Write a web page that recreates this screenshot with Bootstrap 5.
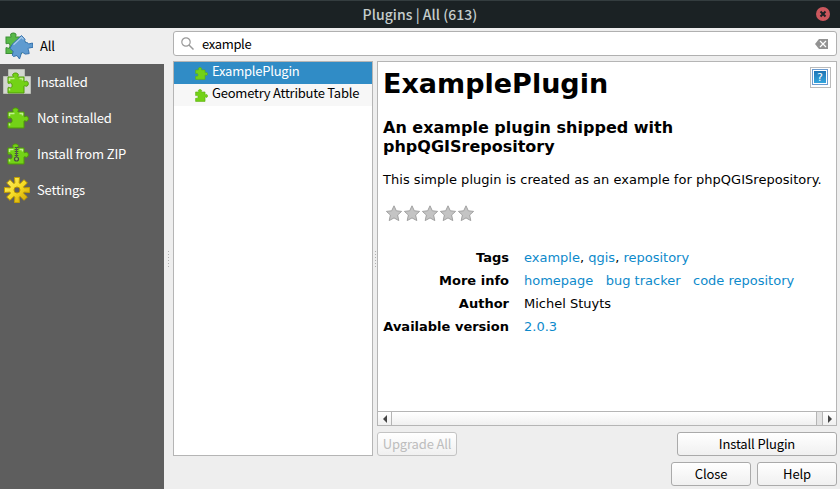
<!DOCTYPE html>
<html lang="en">
<head>
<meta charset="utf-8">
<title>Plugins | All (613)</title>
<link href="https://cdn.jsdelivr.net/npm/bootstrap@5.3.0/dist/css/bootstrap.min.css" rel="stylesheet">
<style>
body{width:840px;height:489px;overflow:hidden;background:#eee;color:#000;font:13px/18px "Noto Sans CJK SC","Noto Sans",sans-serif;letter-spacing:-.15px}
svg{display:block;flex:none}
.titlebar{height:28px;background:#1b2224;border-top:1px solid #343d3f;color:#c5cdcc;font-size:14px;font-weight:500;padding-bottom:2px;letter-spacing:.05px}
.titlebar .shut{right:9px;top:5px}
.side{width:164px;background:#5e5e5e;color:#fff}
.side .entry{height:36px;padding-left:3px;gap:6px}
.side .chosen{background:#eee;color:#000;gap:7px;padding-left:5px}
.grip{width:9px}
.grip i{width:1px;height:16px;background:repeating-linear-gradient(#b0b0b0 0 1px,transparent 1px 3px)}
.main{padding:3px 3px 0 0}
.search{height:25px;border:1px solid #b0b0b0;border-radius:3px;background:#fff;padding:0 8px 0 7px}
.search span{margin-left:8px;letter-spacing:-.35px}
.panel{background:#fff;border:1px solid #b5b5b5}
.results{width:200px;height:395px;letter-spacing:-.23px}
.results div{height:22px;padding-left:21px}
.results span{margin-left:4px;margin-top:-4px}
.results .hit{background:#308cc6;color:#fff}
.results .alt{background:#f7f7f7}
.middle{height:395px;margin-top:5px}
.split{width:4px}
.split i{width:1px;height:16px;background:repeating-linear-gradient(#b0b0b0 0 1px,transparent 1px 3px)}
.detail{height:365px;font:13px/16px "DejaVu Sans",sans-serif;letter-spacing:0}
.detail .text{padding:6px 5px 0}
.detail h1{font-size:27px;line-height:32px;font-weight:700;margin:0}
.detail h3{font-size:16px;line-height:19px;font-weight:700;margin:18px 0 16px;width:330px}
.detail .lead-in{letter-spacing:.03px}
.detail a{color:#0d8acb;text-decoration:none}
.stars{margin:17px 0 0 3px;gap:2px}
.facts{margin-top:28px;display:grid;grid-template-columns:126px auto;column-gap:15px;row-gap:7px;line-height:16px;white-space:pre}
.facts b{text-align:right}
.hlp{right:5px;top:5px;width:21px;height:21px;border:1px solid #bbb;background:#fff}
.scroll{height:14px;border-top:1px solid #b5b5b5;background:linear-gradient(#fff,#f0f0f0)}
.scroll .end{width:14px}
.scroll .first{border-right:1px solid #b5b5b5}
.scroll .last{border-left:1px solid #b5b5b5}
.scroll .rest{width:6px;border-left:1px solid #b5b5b5;background:#e3e3e3}
.push{height:24px;border:1px solid #aaa;border-radius:3px;background:linear-gradient(#fff,#f0f0f0);color:#000;font-size:13px;line-height:18px;padding:0;width:80px;letter-spacing:-.15px}
.push:disabled{color:#bdbdbd;border-color:#c3c3c3;opacity:1}
.wide{width:160px}
.actions{margin-top:6px}
.closing{gap:6px;margin-top:6px}
</style>
<script src="https://cdn.jsdelivr.net/npm/bootstrap@5.3.0/dist/js/bootstrap.bundle.min.js"></script>
</head>
<body class="d-flex flex-column">
<svg width="0" height="0" class="position-absolute" aria-hidden="true">
 <defs>
  <path id="piece" d="M1 4.500H5.500c.8 0 .8-.8.400-1.300C5 1.600 6.800.5 8.500.5s3.500 1.100 2.600 2.700c-.4.600-.4 1.300.4 1.300H17v4c0 .8.800.8 1.500.4 1.500-.8 2.800.6 2.800 2.300s-1.300 3.100-2.800 2.300c-.7-.4-1.500-.4-1.500.4v6.600H1v-5c0-.8.8-.8 1.500-.4 1.500.8 2.600-.4 2.600-2.200s-1.100-3-2.600-2.200c-.7.400-1.500.4-1.500-.4z"/>
  <path id="star" d="M8.500.8l2.300 5 5.300.6-4 3.600 1.200 5.600-4.800-2.700-4.800 2.700 1.200-5.600-4-3.600 5.300-.6z" fill="#c4c4c4" stroke="#a2a2a2"/>
 </defs>
</svg>
<header class="titlebar position-relative d-flex align-items-center justify-content-center flex-shrink-0">
 Plugins | All (613)
 <svg class="shut position-absolute" width="16" height="16"><circle cx="8" cy="8" r="7" fill="#cb575d"/><path d="M5.500 5.500l5 5m0-5l-5 5" stroke="#1b2224" stroke-width="2"/></svg>
</header>
<div class="d-flex flex-grow-1">
 <nav class="side flex-shrink-0">
  <div class="entry chosen d-flex align-items-center">
   <svg width="28" height="28"><use href="#piece" transform="translate(0 .5) scale(.98 1.020)" fill="#58b947" stroke="#3c8f35"/><path d="M7 12.500L16.500 3.500l3.500 3.800c-.7 2 .2 3.200 1.700 3.200 1.200 0 1.300.9 1.900 1.500l3.900-1 .5 4.300-4 .7c-1 .2-1.200 1-.6 1.600l.8 4-4 .5-2.300-1.500c-1-.5-1.400.3-1.700 1.200L14.500 27l-2.500-3.500-3.500 1-1.200-1.200.9-4L5 16.500z" fill="#5f9bd0" stroke="#3471ad"/><path d="M8.500 12.800l8-7.600 2 2.200" fill="none" stroke="#a9cbea" stroke-width="1.300"/></svg>
   <span>All</span>
  </div>
  <div class="entry d-flex align-items-center">
   <svg width="28" height="28"><path d="M5.500 1.500h16v7h6v17h-27v-17h5z" fill="#d3d7cf" stroke="#babdb6"/><use href="#piece" x="4" y="4.500" fill="#73d216" stroke="#4e9a06"/><path d="M6.500 13V10.500h5m-5 12v-2m13-8v-2h-3" fill="none" stroke="#c1f08f" stroke-width="1.500"/></svg>
   <span>Installed</span>
  </div>
  <div class="entry d-flex align-items-center">
   <svg width="28" height="28"><use href="#piece" x="4" y="3.500" fill="#73d216" stroke="#4e9a06"/><path d="M6.500 12V9.500h5m-5 12v-2m13-8v-2h-3" fill="none" stroke="#c1f08f" stroke-width="1.500"/></svg>
   <span>Not installed</span>
  </div>
  <div class="entry d-flex align-items-center">
   <svg width="28" height="28"><use href="#piece" x="4" y="3.500" fill="#73d216" stroke="#4e9a06"/><path d="M6.500 12V9.500h4m-4 12v-2m13-8v-2h-3" fill="none" stroke="#c1f08f" stroke-width="1.500"/><path d="M13.500 7v10" stroke="#455540" stroke-width="3.500" stroke-dasharray="1 1"/><path d="M13.500 7v10" stroke="#555753" stroke-width="1"/><circle cx="13.500" cy="19" r="2" fill="#8ac64e" stroke="#464c43" stroke-width="1.200"/></svg>
   <span>Install from ZIP</span>
  </div>
  <div class="entry d-flex align-items-center">
   <svg width="28" height="28"><defs><linearGradient id="gold" x2="1" y2="1"><stop stop-color="#fff06a"/><stop offset=".5" stop-color="#f5dc25"/><stop offset="1" stop-color="#c99c00"/></linearGradient></defs><path d="M11.500 1.500h5l-.4 5.500 1.200.5 3.700-3.800 3.300 3.300-3.800 3.700.5 1.200 5.500-.4v5l-5.500-.4-.5 1.200 3.800 3.700-3.300 3.300-3.700-3.800-1.200.5.4 5.500h-5l.4-5.500-1.200-.5L7 24.300 3.700 21l3.800-3.700-.5-1.200-5.500.4v-5l5.500.4.5-1.200L3.700 7 7 3.700l3.700 3.800 1.200-.5z" fill="url(#gold)" stroke="#c4a000"/><circle cx="14" cy="14" r="3" fill="#5e5e5e" stroke="#b89300"/></svg>
   <span>Settings</span>
  </div>
 </nav>
 <div class="grip d-flex align-items-center justify-content-center flex-shrink-0"><i></i></div>
 <main class="main flex-grow-1">
  <div class="search d-flex align-items-center">
   <svg width="13" height="13"><circle cx="5" cy="5" r="4.200" fill="none" stroke="#999" stroke-width="1.200"/><path d="M8 8l4.500 4.500" stroke="#999" stroke-width="1.500"/></svg>
   <span>example</span>
   <svg class="ms-auto" width="13" height="10"><path d="M4 0h9v10H4L0 5z" fill="#929292"/><path d="M5 2l6 6m0-6l-6 6" stroke="#fff" stroke-width="1.200"/></svg>
  </div>
  <div class="middle d-flex">
   <div class="results panel flex-shrink-0">
    <div class="hit d-flex align-items-center"><svg width="13" height="13" viewBox="0 0 22 21"><use href="#piece" fill="#73d216" stroke="#5bae10"/></svg><span>ExamplePlugin</span></div>
    <div class="alt d-flex align-items-center"><svg width="13" height="13" viewBox="0 0 22 21"><use href="#piece" fill="#73d216" stroke="#5bae10"/></svg><span>Geometry Attribute Table</span></div>
   </div>
   <div class="split d-flex align-items-center justify-content-center flex-shrink-0"><i></i></div>
   <div class="flex-grow-1">
    <section class="detail panel position-relative d-flex flex-column">
     <div class="text flex-grow-1">
      <h1>ExamplePlugin</h1>
      <h3>An example plugin shipped with phpQGISrepository</h3>
      <div class="lead-in">This simple plugin is created as an example for phpQGISrepository.</div>
      <div class="stars d-flex">
       <svg width="16" height="17"><use href="#star" x="-.5"/></svg><svg width="16" height="17"><use href="#star" x="-.5"/></svg><svg width="16" height="17"><use href="#star" x="-.5"/></svg><svg width="16" height="17"><use href="#star" x="-.5"/></svg><svg width="16" height="17"><use href="#star" x="-.5"/></svg>
      </div>
      <div class="facts">
       <b>Tags</b><span><a href="#">example</a>, <a href="#">qgis</a>, <a href="#">repository</a></span>
       <b>More info</b><span><a href="#">homepage</a>   <a href="#">bug tracker</a>   <a href="#">code repository</a></span>
       <b>Author</b><span>Michel Stuyts</span>
       <b>Available version</b><span><a href="#">2.0.3</a></span>
      </div>
     </div>
     <div class="hlp position-absolute"><svg width="19" height="19"><defs><linearGradient id="sea" x2="0" y2="1"><stop stop-color="#1d74b5"/><stop offset="1" stop-color="#35a5dc"/></linearGradient></defs><rect x="1.500" y="1.500" width="15" height="15" fill="#fff" stroke="#6b9bd0"/><rect x="3" y="3" width="12" height="12" fill="url(#sea)"/><text x="9" y="13" font-size="11" text-anchor="middle" fill="#fff">?</text></svg></div>
     <div class="scroll d-flex flex-shrink-0">
      <div class="end first d-flex align-items-center justify-content-center"><svg width="4" height="8"><path d="M4 0v8L0 4z" fill="#444"/></svg></div>
      <div class="flex-grow-1"></div><div class="rest"></div>
      <div class="end last d-flex align-items-center justify-content-center"><svg width="4" height="8"><path d="M0 0v8l4-4z" fill="#444"/></svg></div>
     </div>
    </section>
    <div class="d-flex justify-content-between actions">
     <button class="push" disabled>Upgrade All</button>
     <button class="push wide">Install Plugin</button>
    </div>
   </div>
  </div>
  <footer class="d-flex justify-content-end closing"><button class="push">Close</button><button class="push">Help</button></footer>
 </main>
</div>
</body>
</html>
